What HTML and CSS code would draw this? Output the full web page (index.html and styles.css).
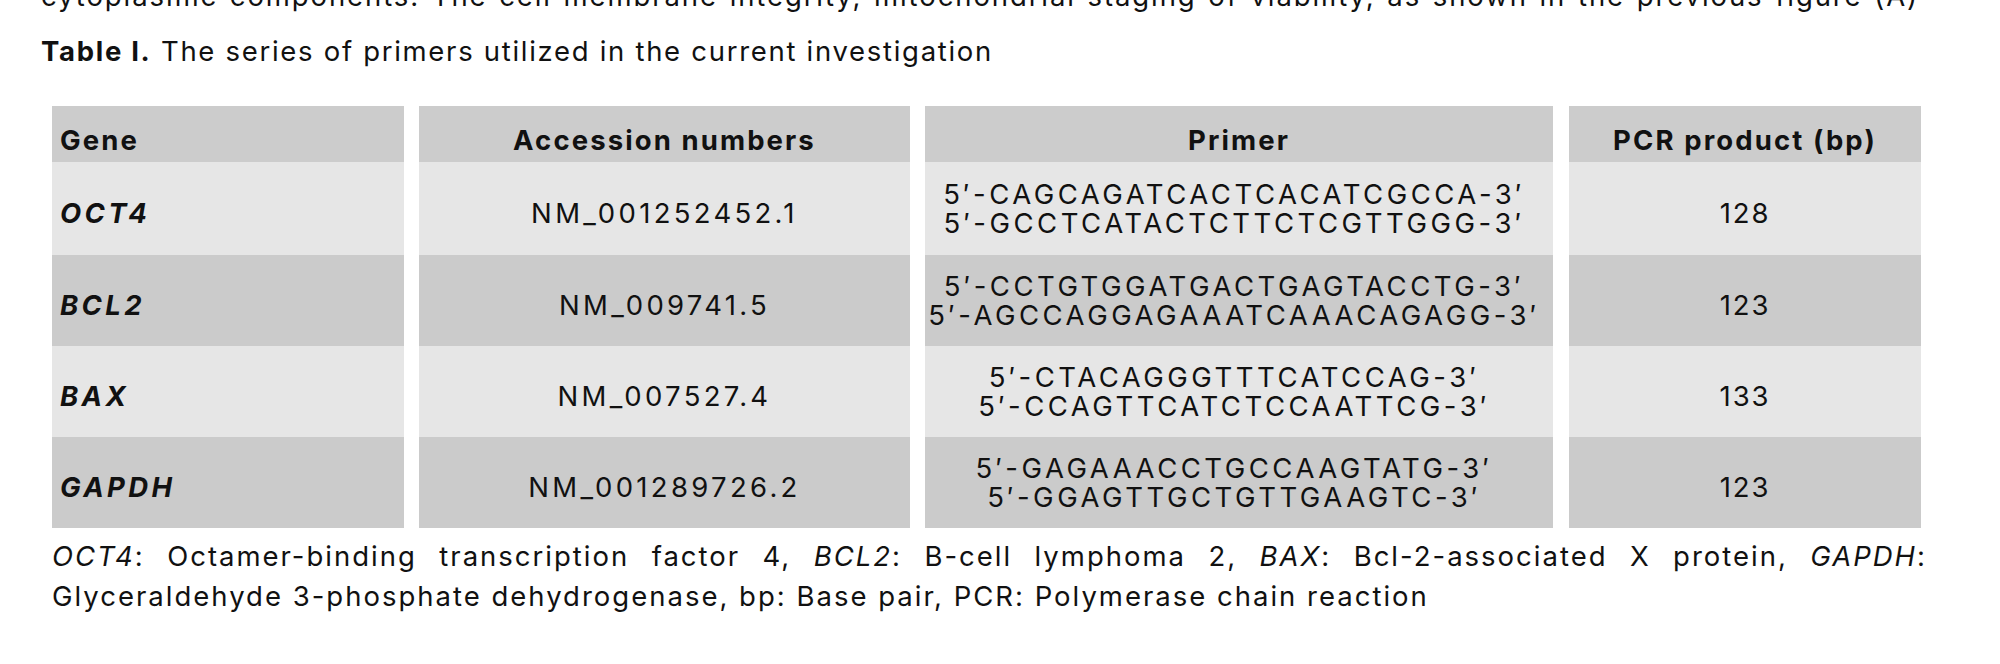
FILE: index.html
```html
<!DOCTYPE html>
<html lang="en">
<head>
<meta charset="utf-8">
<title>Table I</title>
<link rel="stylesheet" href="styles.css">
</head>
<body>
<div class="page">
  <p class="prev">cytoplasmic components. The cell membrane integrity, mitochondrial staging of viability, as shown in the previous figure (A)</p>
  <p class="caption"><b>Table I.</b> The series of primers utilized in the current investigation</p>
  <div class="table">
    <div class="cell head left">Gene</div>
    <div class="cell head">Accession numbers</div>
    <div class="cell head">Primer</div>
    <div class="cell head">PCR product (bp)</div>

    <div class="cell light left gene">OCT4</div>
    <div class="cell light code">NM_001252452.1</div>
    <div class="cell light primer"><span>5′-CAGCAGATCACTCACATCGCCA-3′<br>5′-GCCTCATACTCTTCTCGTTGGG-3′</span></div>
    <div class="cell light">128</div>

    <div class="cell dark left gene">BCL2</div>
    <div class="cell dark code">NM_009741.5</div>
    <div class="cell dark primer"><span>5′-CCTGTGGATGACTGAGTACCTG-3′<br>5′-AGCCAGGAGAAATCAAACAGAGG-3′</span></div>
    <div class="cell dark">123</div>

    <div class="cell light left gene">BAX</div>
    <div class="cell light code">NM_007527.4</div>
    <div class="cell light primer"><span>5′-CTACAGGGTTTCATCCAG-3′<br>5′-CCAGTTCATCTCCAATTCG-3′</span></div>
    <div class="cell light">133</div>

    <div class="cell dark left gene">GAPDH</div>
    <div class="cell dark code">NM_001289726.2</div>
    <div class="cell dark primer"><span>5′-GAGAAACCTGCCAAGTATG-3′<br>5′-GGAGTTGCTGTTGAAGTC-3′</span></div>
    <div class="cell dark">123</div>
  </div>
  <p class="note">
    <span class="line1"><i>OCT4</i>: Octamer-binding transcription factor 4, <i>BCL2</i>: B-cell lymphoma 2, <i>BAX</i>: Bcl-2-associated X protein, <i>GAPDH</i>:</span>
    <span class="line2">Glyceraldehyde 3-phosphate dehydrogenase, bp: Base pair, PCR: Polymerase chain reaction</span>
  </p>
</div>
</body>
</html>
```

FILE: styles.css
```css
html, body {
  margin: 0;
  padding: 0;
  background: #ffffff;
  overflow: hidden;
}

.page {
  width: 1880px;
  padding: 0 0 0 41px;
  font-family: Inter, "Open Sans", sans-serif;
  font-size: 27.5px;
  line-height: 40px;
  letter-spacing: 1.9px;
  color: #111111;
}

.prev {
  margin: -24px 0 0 0;
  width: 1878px;
  text-align: justify;
  text-align-last: justify;
  white-space: nowrap;
  overflow: hidden;
}

.caption {
  margin: 15px 0 0 0;
  letter-spacing: 1.7px;
}

.caption b {
  font-weight: 700;
}

.table {
  margin: 35px 0 0 11px;
  display: grid;
  grid-template-columns: 352px 491px 628px 353px;
  grid-template-rows: 56px 93px 91px 91px 91px;
  column-gap: 15px;
  width: 1870px;
}

.table > .cell:nth-child(4n+4) {
  margin-left: 1px;
}

.cell {
  display: flex;
  flex-direction: column;
  align-items: center;
  justify-content: center;
  text-align: center;
  padding-top: 8px;
}

.cell.left {
  align-items: flex-start;
  padding-left: 8px;
}

.head {
  background: #cccccc;
  font-weight: 700;
  letter-spacing: 2.1px;
  justify-content: flex-start;
  padding-top: 14px;
}

.light {
  background: #e6e6e6;
}

.dark {
  background: #cbcbcb;
}

.gene {
  font-weight: 700;
  font-style: italic;
  letter-spacing: 3.4px;
}

.code {
  letter-spacing: 3.3px;
}

.cell.primer {
  padding-top: 0;
  padding-right: 10px;
  line-height: 29px;
  letter-spacing: 3.5px;
  white-space: nowrap;
}

.note {
  margin: 8px 0 0 11px;
  width: 1875px;
  letter-spacing: 2px;
}

.note span {
  display: block;
}

.line1 {
  text-align: justify;
  text-align-last: justify;
}

.line2 {
  text-align: left;
}
```
